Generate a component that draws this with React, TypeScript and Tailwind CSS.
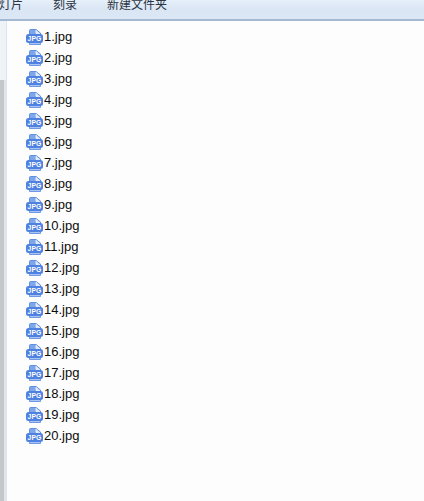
const files = Array.from({ length: 20 }, (_, i) => `${i + 1}.jpg`)

function JpgIcon() {
  return (
    <svg width="17" height="16" viewBox="0 0 17 16" className="shrink-0">
      <path d="M3.5 1.5Q3.5 0.5 4.5 0.5H10L14.5 4V6H3.5Z" fill="#7ea6ea" stroke="#5f8fe0" />
      <path d="M10 1V4.5H14" fill="#e6effc" stroke="#eaf1fc" strokeWidth="0.8" />
      <rect x="0" y="5" width="17" height="9" rx="2.5" fill="#4f82e0" />
      <path d="M3.5 14V15.5H14.5V14" fill="#a9c4f0" stroke="#6d98e4" />
      <text x="1.5" y="12" fontSize="6.8" fontWeight="700" fill="#ffffff" fontFamily="'Liberation Sans', sans-serif" letterSpacing="0.1">JPG</text>
    </svg>
  )
}

export default function App() {
  return (
    <div className="flex h-[501px] w-[424px] flex-col overflow-hidden bg-[#fdfdfd] font-['Liberation_Sans',sans-serif] text-[#0c0c0c]">
      <div className="h-[21px] shrink-0 bg-gradient-to-b from-[#e6f0fa] via-[#dbe6f5] to-[#dce7f6] border-b-2 border-[#a5b8d2]">
        <div className="-mt-[4px] flex text-[12px] leading-[16px] text-[#2b3442] font-['Noto_Sans_CJK_SC',sans-serif]">
          <span className="ml-[-1px] w-[54px]">灯片</span>
          <span className="w-[54px]">刻录</span>
          <span>新建文件夹</span>
        </div>
      </div>
      <div className="flex min-h-0 flex-1">
        <div className="flex w-[7px] shrink-0 flex-col border-r border-[#d6e6f6] bg-[#f0f3f6]">
          <div className="h-[59px]" />
          <div className="flex-1 border-r-2 border-[#e4e6e9] bg-[#c4c7cb]" />
        </div>
        <ul className="pl-[19px] pt-[5px]">
          {files.map(name => (
            <li key={name} className="flex h-[21px] items-center gap-[1px] text-[13px]">
              <JpgIcon />
              <span>{name}</span>
            </li>
          ))}
        </ul>
      </div>
    </div>
  )
}
